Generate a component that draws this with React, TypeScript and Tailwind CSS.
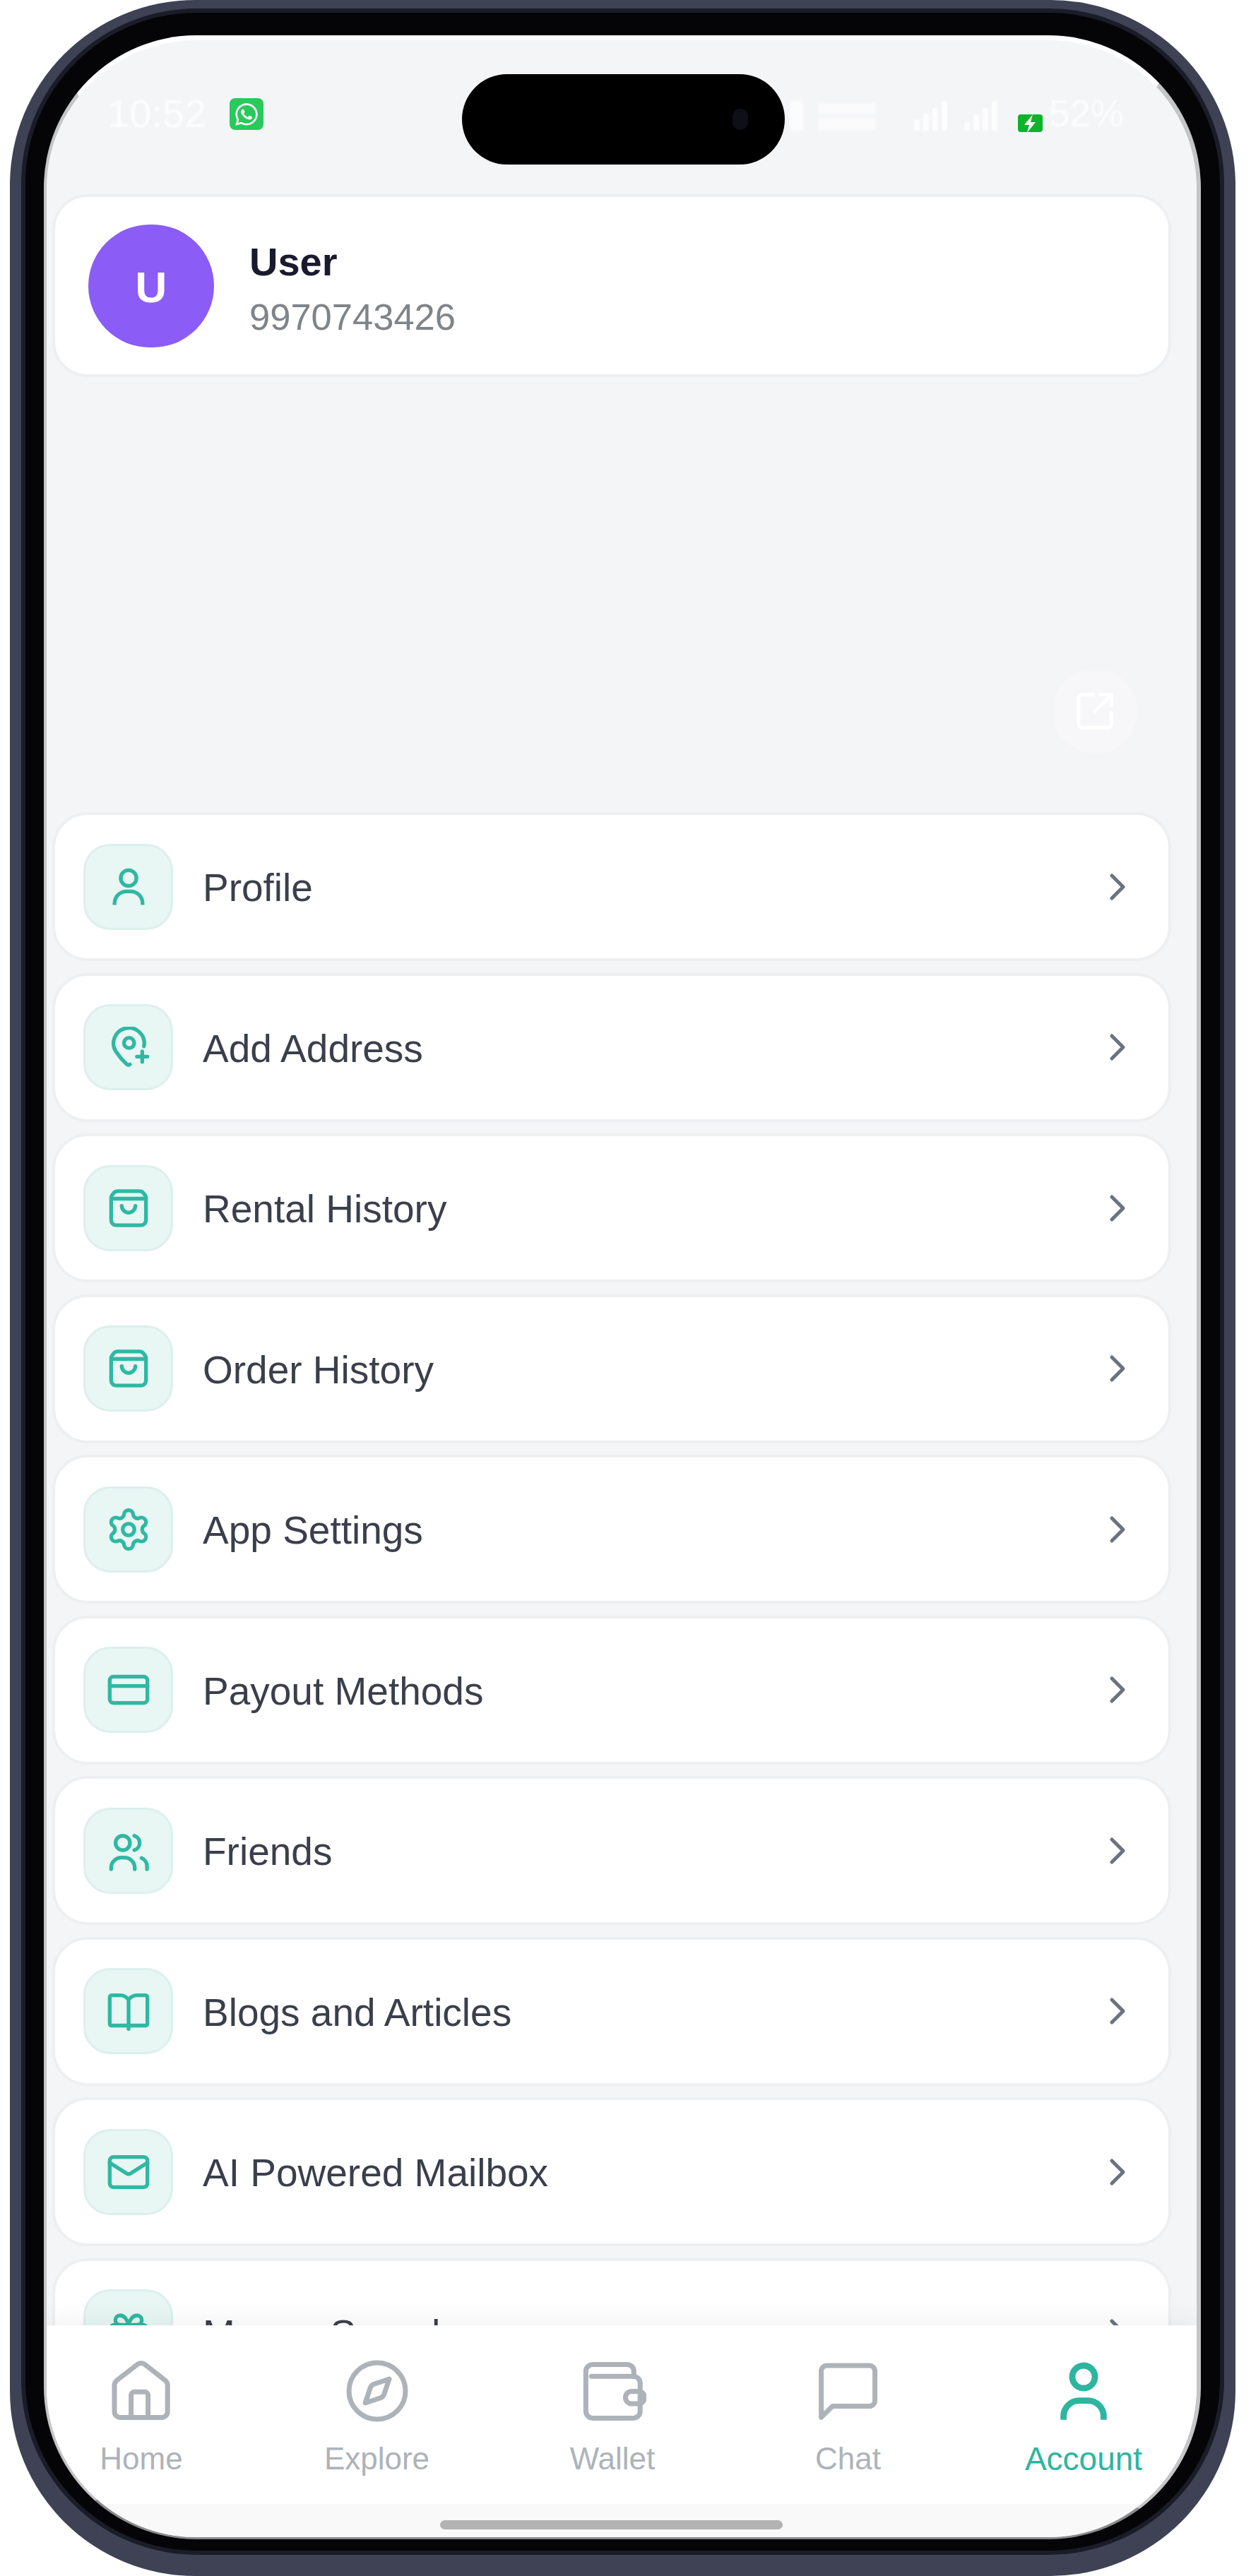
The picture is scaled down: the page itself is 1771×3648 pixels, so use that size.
import { ChevronRight, Compass, CreditCard, Settings, Mail, Gift, SquareArrowOutUpRight } from "lucide-react"
import { FaWhatsapp } from "react-icons/fa"
import type { ReactNode } from "react"

const Glyph = ({ children, size = 58, stroke = 2.2 }: { children: ReactNode; size?: number; stroke?: number }) => (
    <svg width={size} height={size} viewBox="0 0 24 24" fill="none" stroke="currentColor" strokeWidth={stroke} strokeLinecap="round" strokeLinejoin="round">
        {children}
    </svg>
)

const ProfileIcon = () => (
    <Glyph>
        <circle cx="12" cy="6.8" r="4.6" />
        <path d="M3.8 22.6v-1a7 7 0 0 1 7-7h2.4a7 7 0 0 1 7 7v1" strokeLinecap="butt" />
    </Glyph>
)

const AddressIcon = () => (
    <Glyph>
        <path d="M21 11.500A9 9 0 1 0 4.800 14.800c1.800 2.800 4.400 5.600 6.200 7.200.6.5 1.200.5 1.800.1" />
        <circle cx="12.300" cy="9.500" r="3" />
        <path d="M20 14.400v6.200M16.900 17.500h6.200" />
    </Glyph>
)

const BagIcon = () => (
    <Glyph>
        <path d="M5.600 2h12.800a3 3 0 0 1 2.400 1.200l.8 1.100a3 3 0 0 1 .6 1.800V19a3 3 0 0 1-3 3H4.800a3 3 0 0 1-3-3V6.100a3 3 0 0 1 .6-1.800l.8-1.100A3 3 0 0 1 5.600 2z" />
        <path d="M2.400 6.400h19.200" />
        <path d="M8 10.600a4 4 0 0 0 8 0" />
    </Glyph>
)

const FriendsIcon = () => (
    <Glyph>
        <circle cx="8.600" cy="7.400" r="4.200" />
        <path d="M15.400 3.200a4.400 4.400 0 0 1 0 8.400" />
        <path d="M1.800 22.800v-.8a6 6 0 0 1 6-6h1.800a6 6 0 0 1 6 6v.8" />
        <path d="M19.600 16.200a5.400 5.400 0 0 1 3.200 5v1.600" />
    </Glyph>
)

const BookIcon = () => (
    <Glyph size={64} stroke={2}>
        <path d="M12 6C11 4.500 9.500 3.600 7.500 3.600H3a1 1 0 0 0-1 1v14.100a1 1 0 0 0 1 1h18a1 1 0 0 0 1-1V4.600a1 1 0 0 0-1-1h-4.500C14.500 3.600 13 4.500 12 6v15.500" />
    </Glyph>
)

const HomeIcon = () => (
    <Glyph size={96} stroke={1.75}>
        <path d="M3.400 8.200 10.600 2.600a2.200 2.200 0 0 1 2.700 0l7.100 5.600a2.200 2.200 0 0 1 .9 1.700v9.400a2.100 2.100 0 0 1-2.100 2.100H4.600a2.100 2.100 0 0 1-2.100-2.100V9.900a2.200 2.200 0 0 1 .9-1.700z" />
        <path d="M8.400 21.400v-7.900a1.200 1.200 0 0 1 1.200-1.200h3.600a1.200 1.200 0 0 1 1.200 1.200v7.900" />
    </Glyph>
)

const WalletIcon = () => (
    <Glyph size={96} stroke={1.75}>
        <path d="M2.600 7V5a2.400 2.400 0 0 1 2.400-2.400h12.200A2.400 2.400 0 0 1 19.600 5v1.800" />
        <path d="M2.600 5v14.200A2.400 2.400 0 0 0 5 21.600h14.400a2.400 2.400 0 0 0 2.400-2.400V9.200a2.400 2.400 0 0 0-2.400-2.400H4.600" />
        <rect x="16.600" y="12.100" width="6.800" height="4.400" rx="2.200" />
    </Glyph>
)

const ChatIcon = () => (
    <Glyph size={96} stroke={1.75}>
        <path d="M2.400 21.300V5a2 2 0 0 1 2-2h15a2 2 0 0 1 2 2v10.400a2 2 0 0 1-2 2H6.400z" />
    </Glyph>
)

const AccountIcon = () => (
    <Glyph size={96} stroke={2.2}>
        <circle cx="12" cy="7" r="4" />
        <path d="M4.900 22.200V21a5.600 5.600 0 0 1 5.600-5.600h3a5.600 5.600 0 0 1 5.600 5.600v1.200" strokeLinecap="butt" />
    </Glyph>
)

const menuItems: { label: string; icon: ReactNode }[] = [
    { label: "Profile", icon: <ProfileIcon /> },
    { label: "Add Address", icon: <AddressIcon /> },
    { label: "Rental History", icon: <BagIcon /> },
    { label: "Order History", icon: <BagIcon /> },
    { label: "App Settings", icon: <Settings size={66} strokeWidth={1.9} /> },
    { label: "Payout Methods", icon: <CreditCard size={64} strokeWidth={2} /> },
    { label: "Friends", icon: <FriendsIcon /> },
    { label: "Blogs and Articles", icon: <BookIcon /> },
    { label: "AI Powered Mailbox", icon: <Mail size={64} strokeWidth={2} /> },
    { label: "Money Saved", icon: <Gift size={64} strokeWidth={2} /> },
]

const navItems: { label: string; icon: ReactNode; active?: boolean }[] = [
    { label: "Home", icon: <HomeIcon /> },
    { label: "Explore", icon: <Compass size={96} strokeWidth={1.75} /> },
    { label: "Wallet", icon: <WalletIcon /> },
    { label: "Chat", icon: <ChatIcon /> },
    { label: "Account", icon: <AccountIcon />, active: true },
]

const StatusBar = () => (
    <div className="h-[218px] shrink-0 flex justify-between pt-[76px] pl-[78px] pr-[67px] text-white">
        <div className="flex items-start gap-[33px]">
            <span className="text-[56px] leading-[56px] opacity-80 blur-[1px]">10:52</span>
            <div className="mt-[6px] w-[48px] h-[45px] rounded-[8px] bg-[#2ac95c] flex items-center justify-center">
                <FaWhatsapp size={36} />
            </div>
        </div>
        <div className="flex items-end h-[48px] mt-[4px]">
            <div className="w-[20px] h-[43px] bg-white/70 rounded-[4px] blur-[2px]" />
            <div className="ml-[20px] w-[82px] flex flex-col gap-[5px] blur-[2px]">
                <div className="h-[16px] bg-white/60" />
                <div className="h-[18px] bg-white/60" />
            </div>
            <div className="ml-[54px] flex items-end gap-[5px] blur-[1px]">
                <div className="w-[8px] h-[16px] bg-white/80" />
                <div className="w-[8px] h-[24px] bg-white/80" />
                <div className="w-[8px] h-[32px] bg-white/80" />
                <div className="w-[8px] h-[42px] bg-white/80" />
            </div>
            <div className="ml-[24px] flex items-end gap-[5px] blur-[1px]">
                <div className="w-[8px] h-[12px] bg-white/80" />
                <div className="w-[8px] h-[22px] bg-white/80" />
                <div className="w-[8px] h-[32px] bg-white/80" />
                <div className="w-[8px] h-[42px] bg-white/80" />
            </div>
            <div className="ml-[29px] mb-[-2px] w-[35px] h-[25px] rounded-[4px] bg-[#0ab52a] flex items-center justify-center">
                <svg width="24" height="26" viewBox="0 0 24 26" fill="white">
                    <path d="M16 0 4 15h7l-3 11 12-15h-7z" />
                </svg>
            </div>
            <span className="ml-[9px] text-[53px] leading-[48px] opacity-80 blur-[1px]">52%</span>
        </div>
    </div>
)

const ProfileCard = () => (
    <div className="h-[259px] bg-white rounded-[50px] border-[4px] border-[#eeeff1] flex items-center pl-[47px] gap-[50px]">
        <div className="w-[178px] h-[174px] pt-[4px] rounded-full bg-[#8b5cf6] flex items-center justify-center text-white text-[62px] font-bold">
            U
        </div>
        <div className="flex flex-col mt-[10px]">
            <span className="text-[56px] leading-[78px] font-bold text-[#1a1a2e]">User</span>
            <span className="text-[52.5px] leading-[78px] text-[#7f8489]">9970743426</span>
        </div>
    </div>
)

const MenuRow = ({ label, icon }: { label: string; icon: ReactNode }) => (
    <div className="h-[211px] shrink-0 bg-white rounded-[50px] border-[4px] border-[#eeeff1] flex items-center pl-[40px] pr-[40px]">
        <div className="w-[127px] h-[122px] rounded-[38px] bg-[#e8f6f4] border-[3px] border-[#dcf0ec] text-[#2fb8a2] flex items-center justify-center">
            {icon}
        </div>
        <span className="ml-[42px] mt-[4px] flex-1 text-[55px] text-[#3a3f4b]">{label}</span>
        <ChevronRight className="text-[#6b7280]" size={64} strokeWidth={1.9} />
    </div>
)

const BottomNav = () => (
    <div className="relative z-10 shrink-0 shadow-[0_-10px_30px_rgba(0,0,0,0.05)]">
        <div className="h-[253px] bg-white flex justify-between pt-[45px] pl-[49px] pr-[75px]">
            {navItems.map((item) => (
                <div key={item.label} className={`w-[170px] flex flex-col items-center ${item.active ? "text-[#2db5a0]" : "text-[#adb3b9]"}`}>
                    {item.icon}
                    <span className={`mt-[21px] leading-[54px] ${item.active ? "text-[46px]" : "text-[44px]"}`}>{item.label}</span>
                </div>
            ))}
        </div>
        <div className="h-[47px] bg-[#f9f9fa] flex justify-center pt-[23px] pr-[30px]">
            <div className="w-[485px] h-[13px] rounded-full bg-[#b3b3b3]" />
        </div>
    </div>
)

const App = () => {
    return (
        <div className="w-[1771px] h-[3648px] bg-white pl-[14px] font-['Liberation_Sans',Arial,sans-serif]">
            <div className="w-[1735px] h-[3648px] rounded-[262px] bg-[#3e4254] pt-[12px] px-[16px] pb-[30px]">
                <div className="relative h-full rounded-[248px] bg-[#050508] border-[6px] border-[#1a1c27] pt-[32px] pl-[26px] pr-[27px] pb-[16px]">
                    <div className="h-full rounded-[216px] overflow-hidden bg-[#f4f5f7] border-l-[4px] border-r-[6px] border-t-[7px] border-b-[3px] border-l-[#c4c5c7] border-r-[#c4c5c7] border-t-white border-b-[#8c8c8c] flex flex-col">
                        <div className="flex-1 min-h-0 overflow-hidden pl-[8px] pr-[36px]">
                            <StatusBar />
                            <ProfileCard />
                            <div className="h-[616px] flex justify-end pt-[413px] pr-[48px]">
                                <div className="w-[120px] h-[120px] rounded-full bg-[#f7f7f9] text-white flex items-center justify-center">
                                    <SquareArrowOutUpRight size={62} strokeWidth={2} />
                                </div>
                            </div>
                            <div className="flex flex-col gap-[16.5px]">
                                {menuItems.map((item) => (
                                    <MenuRow key={item.label} label={item.label} icon={item.icon} />
                                ))}
                            </div>
                        </div>
                        <BottomNav />
                    </div>
                    <div className="absolute left-[618px] top-[87px] w-[457px] h-[128px] rounded-full bg-black flex items-center justify-end pr-[52px]">
                        <div className="w-[22px] h-[30px] rounded-full bg-[#0e1018]" />
                    </div>
                </div>
            </div>
        </div>
    )
}

export default App
